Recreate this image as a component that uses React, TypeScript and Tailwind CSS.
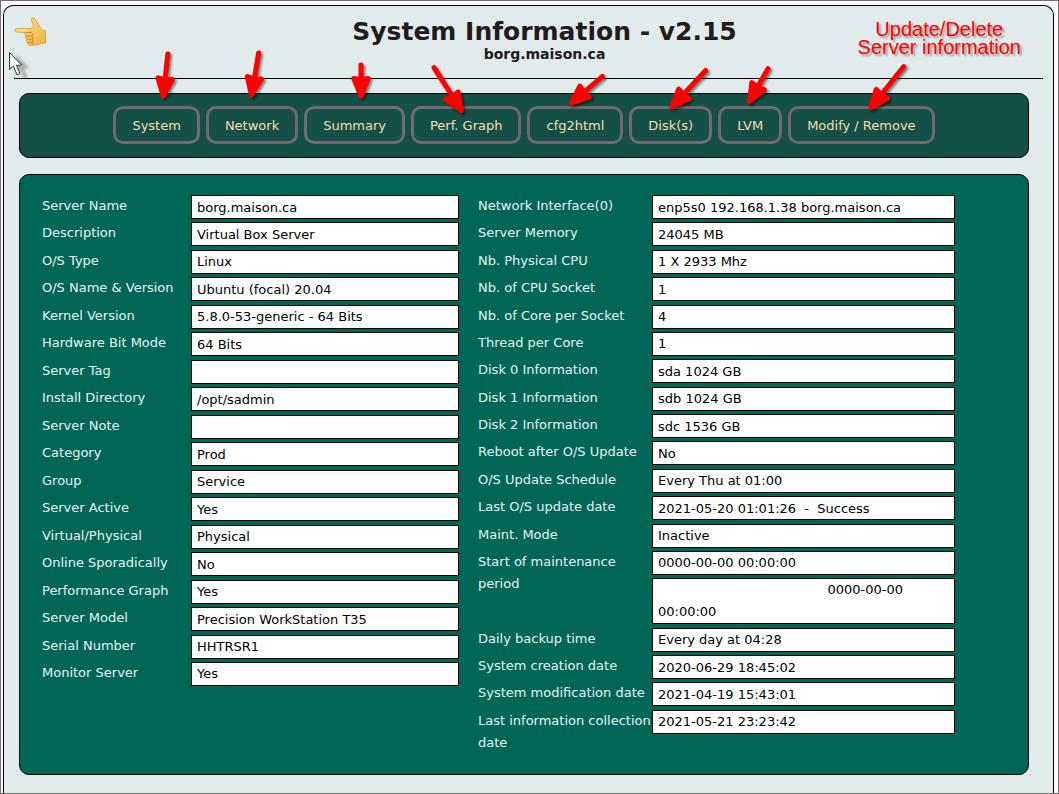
import React from "react";

type Field = { label: string; value: string; tall?: boolean; lines?: 2 };

const leftFields: Field[] = [
  { label: "Server Name", value: "borg.maison.ca" },
  { label: "Description", value: "Virtual Box Server" },
  { label: "O/S Type", value: "Linux" },
  { label: "O/S Name & Version", value: "Ubuntu (focal) 20.04" },
  { label: "Kernel Version", value: "5.8.0-53-generic - 64 Bits" },
  { label: "Hardware Bit Mode", value: "64 Bits" },
  { label: "Server Tag", value: "" },
  { label: "Install Directory", value: "/opt/sadmin" },
  { label: "Server Note", value: "" },
  { label: "Category", value: "Prod" },
  { label: "Group", value: "Service" },
  { label: "Server Active", value: "Yes" },
  { label: "Virtual/Physical", value: "Physical" },
  { label: "Online Sporadically", value: "No" },
  { label: "Performance Graph", value: "Yes" },
  { label: "Server Model", value: "Precision WorkStation T35" },
  { label: "Serial Number", value: "HHTRSR1" },
  { label: "Monitor Server", value: "Yes" },
];

const rightFields: Field[] = [
  { label: "Network Interface(0)", value: "enp5s0 192.168.1.38 borg.maison.ca" },
  { label: "Server Memory", value: "24045 MB" },
  { label: "Nb. Physical CPU", value: "1 X 2933 Mhz" },
  { label: "Nb. of CPU Socket", value: "1" },
  { label: "Nb. of Core per Socket", value: "4" },
  { label: "Thread per Core", value: "1" },
  { label: "Disk 0 Information", value: "sda 1024 GB" },
  { label: "Disk 1 Information", value: "sdb 1024 GB" },
  { label: "Disk 2 Information", value: "sdc 1536 GB" },
  { label: "Reboot after O/S Update", value: "No" },
  { label: "O/S Update Schedule", value: "Every Thu at 01:00" },
  { label: "Last O/S update date", value: "2021-05-20 01:01:26  -  Success" },
  { label: "Maint. Mode", value: "Inactive" },
  { label: "Start of maintenance period", value: "0000-00-00 00:00:00", lines: 2 },
  { label: "", value: " ".repeat(41) + "0000-00-00 00:00:00", tall: true },
  { label: "Daily backup time", value: "Every day at 04:28" },
  { label: "System creation date", value: "2020-06-29 18:45:02" },
  { label: "System modification date", value: "2021-04-19 15:43:01" },
  { label: "Last information collection date", value: "2021-05-21 23:23:42" },
];

const tabs = ["System", "Network", "Summary", "Perf. Graph", "cfg2html", "Disk(s)", "LVM", "Modify / Remove"];

// Tail and tip of each annotation arrow.
const arrows: [number, number, number, number][] = [
  [168, 52, 163, 99],
  [259, 51, 251, 98],
  [361, 63, 361, 99],
  [433, 66, 463, 113],
  [604, 75, 569, 105],
  [707, 69, 670, 109],
  [769, 67, 748, 104],
  [905, 65, 869, 110],
];

function Arrow({ points: [x1, y1, x2, y2] }: { points: [number, number, number, number] }) {
  const length = Math.hypot(x2 - x1, y2 - y1);
  const angle = (Math.atan2(y2 - y1, x2 - x1) * 180) / Math.PI;
  return (
    <g transform={`translate(${x2} ${y2}) rotate(${angle})`}>
      <path d={`M${-length + 2} 0H-16`} stroke="#f00" strokeWidth="5" strokeLinecap="round" />
      <path d="M-3 0L-20.500 -7.200L-19.500 0L-20.500 7.200Z" fill="#f00" stroke="#f00" strokeWidth="5" strokeLinejoin="round" />
    </g>
  );
}

function BackHand() {
  return (
    <svg viewBox="0 0 32 32" className="size-8" aria-hidden="true">
      <defs>
        <linearGradient id="skin" x1="0" y1="0" x2="1" y2="1">
          <stop offset="0" stopColor="#ffe394" />
          <stop offset="1" stopColor="#eeb343" />
        </linearGradient>
      </defs>
      <path
        d="M2.500 13.500C.8 13.500 .8 17 2.500 17L11.500 17.600C10.500 19 11 20.600 12 21C11.200 22.500 11.700 24 12.700 24.300C12 25.800 12.400 27.100 13.600 27.400C13.200 29 14 30.200 15.500 30.200L22 30C25 29.800 26 28.700 28 28.300L31.500 28V16C29 15.800 27 14 26 12L21 4C19.500 2 17 2.800 17.500 5L19.500 11C19 12 18 13.200 16.500 13.500Z"
        fill="url(#skin)"
        stroke="#dda12d"
        strokeWidth="0.900"
      />
      <path
        d="M11.500 17.600H17.500C19.500 18 19 20.800 17.500 21H12M17.500 21C19.500 21.200 19.500 24 18 24.300H12.700M18 24.300C19.500 24.600 19.300 27.200 18 27.400H13.600M18 27.400C19 28 19 29.500 17.500 30.100"
        fill="none"
        stroke="#cb8720"
        strokeWidth="1"
      />
      <path d="M2.500 14.700H14" stroke="#fff0b5" strokeWidth="0.800" />
    </svg>
  );
}

function FieldGroup({ fields, prefix, className }: { fields: Field[]; prefix: string; className: string }) {
  return (
    <div className={className}>
      {fields.map((f, i) => {
        const id = `${prefix}-${i}`;
        return (
          <React.Fragment key={id}>
            {!f.tall && (
              <label htmlFor={id} className={f.lines ? "row-span-2 h-11 text-[#e9f2ef]" : "text-[#e9f2ef]"}>
                {f.label}
              </label>
            )}
            {f.tall ? (
              <textarea
                id={id}
                readOnly
                rows={2}
                aria-label="End of maintenance period"
                defaultValue={f.value}
                className="col-start-2 block h-[46px] w-full resize-none overflow-hidden border border-black bg-white px-[5px] text-black outline-none"
              />
            ) : (
              <input
                id={id}
                readOnly
                defaultValue={f.value}
                className="h-6 w-full min-w-0 border border-black bg-white px-[5px] text-black outline-none"
              />
            )}
          </React.Fragment>
        );
      })}
    </div>
  );
}

export default function App() {
  return (
    <div className="relative flex min-h-screen flex-col overflow-hidden border border-[#757173] bg-[#fdf9fb] pt-1 pr-1 pl-[2px] font-['DejaVu_Sans',sans-serif]">
      <div className="grow rounded-t-[10px] border border-b-0 border-black bg-[#e2ebec] px-[10px]">
        <header className="flex h-[73px] items-start border-b border-black">
          <a href="#back" aria-label="Back" className="mt-[9px] shrink-0">
            <BackHand />
          </a>
          <div className="grow pt-2 text-center text-[#231a1b]">
            <h1 className="text-[25px] leading-[35px] font-bold">System Information - v2.15</h1>
            <p className="text-[14px] leading-[10px] font-bold">borg.maison.ca</p>
          </div>
        </header>

        <main className="mr-[14px] ml-[5px] text-[13px] leading-[22px]">
          <nav className="mt-[14px] flex flex-wrap justify-center gap-[6px] rounded-[10px] border border-black bg-[#145045] pt-3 pb-[13px]">
            {tabs.map((t) => (
              <a
                key={t}
                href="#tab"
                className="flex h-[38px] items-center rounded-[10px] border-3 border-[#706a70] px-4 pt-0.5 text-[#f5deb3]"
              >
                {t}
              </a>
            ))}
          </nav>

          <section className="mt-4 mb-4 grid grid-cols-[417fr_477fr] items-start gap-[19px] rounded-[10px] border border-black bg-[#006757] pt-5 pr-[73px] pb-5 pl-[22px]">
            <FieldGroup
              fields={leftFields}
              prefix="left"
              className="grid h-[491px] grid-cols-[149px_1fr] content-between items-start"
            />
            <FieldGroup
              fields={rightFields}
              prefix="right"
              className="grid h-[559px] grid-cols-[174px_1fr] content-between items-start"
            />
          </section>
        </main>
      </div>

      <p className="pointer-events-none absolute top-[19px] right-[37px] text-center font-['Liberation_Sans',sans-serif] text-[20px] leading-[18px] text-[#f00] [text-shadow:2px_2px_2px_rgba(0,0,0,0.35)]">
        Update/Delete
        <br />
        Server information
      </p>

      <svg
        width="1059"
        height="160"
        viewBox="0 0 1059 160"
        className="pointer-events-none absolute -top-px -left-px"
        fill="none"
        aria-hidden="true"
      >
        <g className="drop-shadow-[2px_2px_1px_rgba(0,0,0,0.45)]">
          {arrows.map((a) => (
            <Arrow key={a.join()} points={a} />
          ))}
        </g>
        <path
          d="M9.500 52.500V69.500L13.500 66L17 75L20 73.500L16.500 65.500L21.500 65Z"
          fill="#fafafa"
          stroke="#3c3c3c"
          className="drop-shadow-[7px_3px_1px_rgba(0,0,0,0.25)]"
        />
      </svg>
    </div>
  );
}
